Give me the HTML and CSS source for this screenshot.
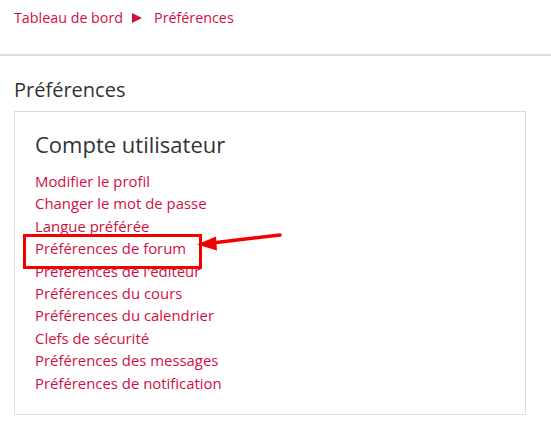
FILE: index.html
```html
<!DOCTYPE html>
<html lang="fr">
<head>
<meta charset="utf-8">
<title>Préférences</title>
<link rel="stylesheet" href="styles.css">
</head>
<body>
<header class="top">
  <nav class="breadcrumb">
    <a href="#">Tableau de bord</a>
    <span class="sep"></span>
    <a href="#">Préférences</a>
  </nav>
</header>
<main class="content">
  <h2 class="page-title">Préférences</h2>
  <section class="card">
    <h3 class="card-title">Compte utilisateur</h3>
    <ul class="links">
      <li><a href="#">Modifier le profil</a></li>
      <li><a href="#">Changer le mot de passe</a></li>
      <li><a href="#">Langue préférée</a></li>
      <li class="highlight"><a href="#">Préférences de forum</a>
        <svg class="arrow" width="100" height="24" viewBox="0 0 100 24">
          <line x1="16" y1="12" x2="84" y2="4" stroke="#f30000" stroke-width="3.5" stroke-linecap="round"/>
          <polygon points="1,13.5 20,5.5 21,19.5" fill="#f30000"/>
        </svg>
      </li>
      <li><a href="#">Préférences de l'éditeur</a></li>
      <li><a href="#">Préférences du cours</a></li>
      <li><a href="#">Préférences du calendrier</a></li>
      <li><a href="#">Clefs de sécurité</a></li>
      <li><a href="#">Préférences des messages</a></li>
      <li><a href="#">Préférences de notification</a></li>
    </ul>
  </section>
</main>
</body>
</html>
```
FILE: styles.css
```css
* { box-sizing: border-box; }
body {
  margin: 0;
  font-family: "Open Sans", "Noto Sans", sans-serif;
  color: #333;
  background: #fff;
}
a { color: #d10f3f; text-decoration: none; }
.top {
  height: 56px;
  border-bottom: 2px solid #ddd;
}
.breadcrumb {
  display: flex;
  align-items: center;
  gap: 9px;
  padding: 0 14px;
  height: 36px;
  font-size: 14.3px;
  line-height: 20px;
}
.sep {
  width: 0;
  height: 0;
  border-left: 10px solid #d10f3f;
  border-top: 5.5px solid transparent;
  border-bottom: 5.5px solid transparent;
  margin-right: 3px;
}
.content { padding: 0 14px; }
.page-title {
  margin: 20px 0 7px;
  font-size: 20px;
  font-weight: 400;
  line-height: 28px;
}
.card {
  width: 512px;
  height: 304px;
  border: 1px solid #ddd;
  padding: 17px 20px 0;
}
.card-title {
  margin: 0 0 11px;
  font-size: 22px;
  font-weight: 400;
  line-height: 30px;
}
.links {
  list-style: none;
  margin: 0;
  padding: 0;
  font-size: 14.9px;
  line-height: 22.4px;
}
.highlight { position: relative; }
.highlight::before {
  content: "";
  position: absolute;
  left: -12px;
  top: -3px;
  width: 173px;
  height: 29px;
  border: 3.5px solid #f30000;
}
.arrow { position: absolute; left: 161px; top: -6px; }
```
